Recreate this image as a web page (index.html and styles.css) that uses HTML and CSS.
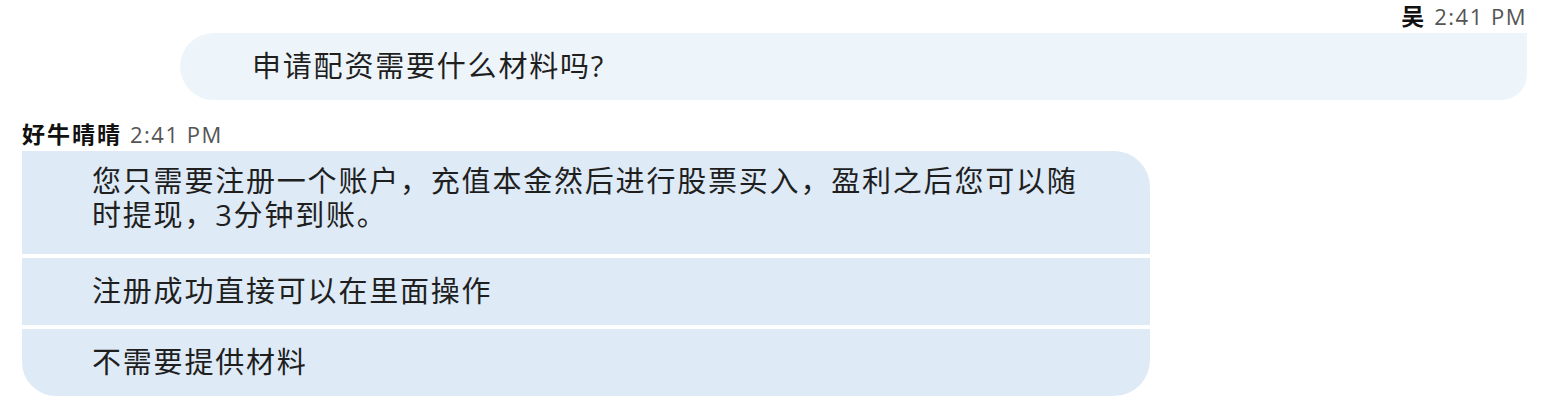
FILE: index.html
```html
<!DOCTYPE html>
<html lang="zh">
<head>
<meta charset="utf-8">
<title>Chat</title>
<link rel="stylesheet" href="styles.css">
</head>
<body>
<div class="chat">
  <div class="msg msg-out">
    <div class="meta"><span class="name">吴</span><span class="time">2:41 PM</span></div>
    <div class="bubbles">
      <div class="bubble">申请配资需要什么材料吗?</div>
    </div>
  </div>
  <div class="msg msg-in">
    <div class="meta"><span class="name">好牛晴晴</span><span class="time">2:41 PM</span></div>
    <div class="bubbles">
      <div class="bubble bubble-multi">您只需要注册一个账户，充值本金然后进行股票买入，盈利之后您可以随<br>时提现，3分钟到账。</div>
      <div class="bubble">注册成功直接可以在里面操作</div>
      <div class="bubble">不需要提供材料</div>
    </div>
  </div>
</div>
</body>
</html>
```
FILE: styles.css
```css
* { box-sizing: border-box; }
html, body { margin: 0; padding: 0; background: #ffffff; }
body {
  font-family: "Open Sans", "Noto Sans CJK SC", sans-serif;
  color: #1f1f1f;
}
.chat {
  padding: 4px 16px 0 22px;
  display: flex;
  flex-direction: column;
}
.msg { display: flex; flex-direction: column; }
.meta {
  font-size: 22px;
  line-height: 24px;
  display: flex;
  align-items: baseline;
  gap: 8px;
}
.name { font-weight: 700; color: #111; font-size: 23px; letter-spacing: 2px; }
.time { color: #555; letter-spacing: 1.5px; }
.bubbles { display: flex; flex-direction: column; gap: 4px; }
.bubble {
  font-size: 29px;
  line-height: 34px;
  letter-spacing: 1.8px;
  padding: 16px 0 17px 0;
}
.bubble-multi { padding: 13px 0 22px 0; }
.msg-out { align-items: flex-end; }
.msg-out .meta { margin-bottom: 5px; }
.msg-out .bubbles { align-self: stretch; padding-left: 158px; }
.msg-out .bubble {
  background: #eef5fa;
  padding-left: 72px;
  border-radius: 34px 0 26px 34px;
}
.msg-in { margin-top: 22px; }
.msg-in .meta { margin-bottom: 5px; }
.msg-in .bubbles { width: 1128px; }
.msg-in .bubble {
  background: #deeaf6;
  padding-left: 70px;
}
.msg-in .bubble:first-child { border-radius: 0 36px 0 0; }
.msg-in .bubble:last-child { border-radius: 0 0 36px 34px; }
```
